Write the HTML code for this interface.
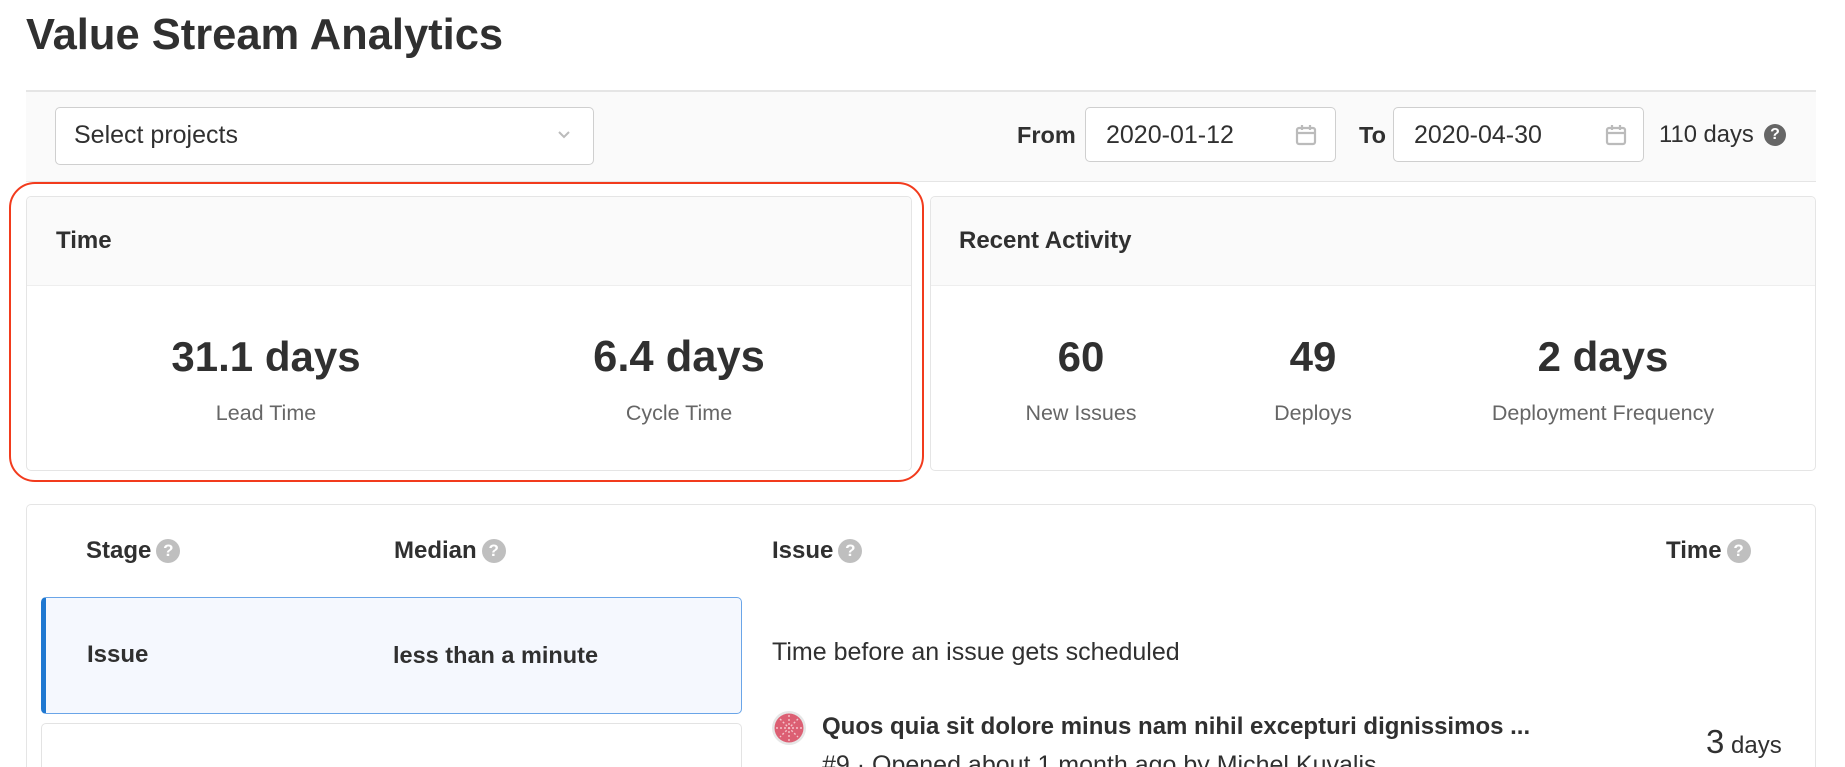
<!DOCTYPE html>
<html><head><meta charset="utf-8"><style>
*{box-sizing:border-box;margin:0;padding:0}
html{width:1845px;height:767px;overflow:hidden}
body{width:1845px;height:767px;overflow:hidden;background:#fff;font-family:"Liberation Sans",Arial,sans-serif;color:#303030;position:relative}
.a{position:absolute;white-space:nowrap}
.b{font-weight:bold}
.q{display:inline-block;width:24px;height:24px;border-radius:50%;background:#bfbfbf;color:#fff;font-size:17px;font-weight:bold;text-align:center;line-height:24px;vertical-align:2px;margin-left:5px}
.box{position:absolute;border:1px solid #e5e5e5;border-radius:5px;background:#fff}
.inp{position:absolute;border:1px solid #cfcfcf;border-radius:5px;background:#fff}
.big{font-size:42px;font-weight:bold;line-height:42px;text-align:center;width:400px}
.lbl{font-size:21.5px;color:#666;line-height:22px;text-align:center;width:400px}
</style></head><body>
<div class="a b" style="left:26px;top:14px;font-size:43.5px;line-height:43px;color:#303030">Value Stream Analytics</div>

<div class="a" style="left:26px;top:90px;width:1790px;height:92px;background:#fafafa;border-top:2px solid #e5e5e5;border-bottom:1px solid #e5e5e5"></div>
<div class="inp" style="left:55px;top:107px;width:539px;height:58px"></div>
<div class="a" style="left:74px;top:123px;font-size:25px;line-height:24px">Select projects</div>
<svg class="a" style="left:556px;top:129px" width="16" height="12" viewBox="0 0 16 12"><path d="M3 3l5 5 5-5" fill="none" stroke="#bbb" stroke-width="2"/></svg>

<div class="a b" style="left:1017px;top:123px;font-size:23.5px;line-height:24px">From</div>
<div class="inp" style="left:1085px;top:107px;width:251px;height:55px"></div>
<div class="a" style="left:1106px;top:123px;font-size:25px;line-height:24px">2020-01-12</div>
<svg class="a" style="left:1294px;top:123px" width="24" height="24" viewBox="0 0 24 24"><rect x="3" y="5" width="18" height="16" rx="2" fill="none" stroke="#bbb" stroke-width="2.2"/><path d="M3 10h18M8 2v5M16 2v5" stroke="#bbb" stroke-width="2.2"/></svg>
<div class="a b" style="left:1359px;top:123px;font-size:23.5px;line-height:24px">To</div>
<div class="inp" style="left:1393px;top:107px;width:251px;height:55px"></div>
<div class="a" style="left:1414px;top:123px;font-size:25px;line-height:24px">2020-04-30</div>
<svg class="a" style="left:1604px;top:123px" width="24" height="24" viewBox="0 0 24 24"><rect x="3" y="5" width="18" height="16" rx="2" fill="none" stroke="#bbb" stroke-width="2.2"/><path d="M3 10h18M8 2v5M16 2v5" stroke="#bbb" stroke-width="2.2"/></svg>
<div class="a" style="left:1659px;top:123px;font-size:23.8px;line-height:24px">110 days</div>
<div class="a" style="left:1764px;top:124px;width:22px;height:22px;border-radius:50%;background:#666;color:#fff;font-size:16px;font-weight:bold;text-align:center;line-height:22px">?</div>

<div class="box" style="left:26px;top:196px;width:886px;height:275px;overflow:hidden"><div style="height:89px;background:#fafafa;border-bottom:1px solid #eee"></div></div>
<div class="a b" style="left:56px;top:229px;font-size:24px;line-height:24px">Time</div>
<div class="a big" style="left:66px;top:336px">31.1 days</div>
<div class="a lbl" style="left:66px;top:402px">Lead Time</div>
<div class="a big" style="left:479px;top:336px;font-size:43.5px">6.4 days</div>
<div class="a lbl" style="left:479px;top:402px">Cycle Time</div>
<div class="a" style="left:9px;top:182px;width:915px;height:300px;border:2.5px solid #f23b1d;border-radius:26px"></div>

<div class="box" style="left:930px;top:196px;width:886px;height:275px;overflow:hidden"><div style="height:89px;background:#fafafa;border-bottom:1px solid #eee"></div></div>
<div class="a b" style="left:959px;top:229px;font-size:24px;line-height:24px">Recent Activity</div>
<div class="a big" style="left:881px;top:336px">60</div>
<div class="a lbl" style="left:881px;top:402px">New Issues</div>
<div class="a big" style="left:1113px;top:336px">49</div>
<div class="a lbl" style="left:1113px;top:402px">Deploys</div>
<div class="a big" style="left:1403px;top:336px">2 days</div>
<div class="a lbl" style="left:1403px;top:402px">Deployment Frequency</div>

<div class="a" style="left:26px;top:504px;width:1790px;height:263px;border:1px solid #e5e5e5;border-bottom:none;border-radius:5px 5px 0 0"></div>
<div class="a b" style="left:86px;top:539px;font-size:24px;line-height:24px">Stage<span class="q">?</span></div>
<div class="a b" style="left:394px;top:539px;font-size:24px;line-height:24px">Median<span class="q">?</span></div>
<div class="a b" style="left:772px;top:539px;font-size:24px;line-height:24px">Issue<span class="q">?</span></div>
<div class="a b" style="left:1666px;top:539px;font-size:24px;line-height:24px">Time<span class="q">?</span></div>

<div class="a" style="left:41px;top:597px;width:701px;height:117px;background:#f5f8fe;border:1.5px solid #6aa5e8;border-left:5px solid #1f78d1;border-radius:5px"></div>
<div class="a b" style="left:87px;top:643px;font-size:24px;line-height:24px">Issue</div>
<div class="a b" style="left:393px;top:643px;font-size:23.5px;line-height:24px">less than a minute</div>
<div class="a" style="left:41px;top:723px;width:701px;height:44px;border:1.5px solid #e3e3e3;border-bottom:none;border-radius:5px 5px 0 0"></div>

<div class="a" style="left:772px;top:640px;font-size:25px;line-height:24px">Time before an issue gets scheduled</div>
<svg class="a" style="left:771px;top:710px" width="36" height="36" viewBox="0 0 36 36"><circle cx="18" cy="18" r="17" fill="#e6e6e6"/><circle cx="18" cy="18" r="14.5" fill="#dc5f73"/><path d="M18 5v26M5 18h26M9 9l18 18M27 9L9 27" stroke="#f4c4cb" stroke-width="1.4" stroke-dasharray="2 2"/></svg>
<div class="a b" style="left:822px;top:715px;font-size:24px;line-height:24px">Quos quia sit dolore minus nam nihil excepturi dignissimos ...</div>
<div class="a" style="left:822px;top:753px;font-size:25px;line-height:24px">#9 · Opened about 1 month ago by Michel Kuvalis</div>
<div class="a" style="left:1706px;top:727px;font-size:24px;line-height:30px"><span style="font-size:33px">3</span> days</div>
</body></html>
